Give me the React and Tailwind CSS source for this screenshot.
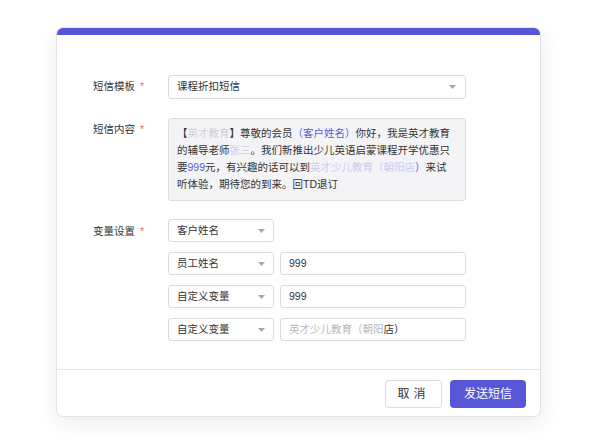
import React from "react";

const Caret = ({ className = "" }) => (
  <svg width="7" height="4" viewBox="0 0 7 4" className={className}>
    <path d="M0 0h7L3.5 4z" fill="#a8a8a8" />
  </svg>
);

const Label = ({ children, className = "" }) => (
  <div className={`w-[75px] shrink-0 text-[10.5px] text-[#333] ${className}`}>
    {children}
    <span className="ml-[5px] text-[#f0686a]">*</span>
  </div>
);

const SmallSelect = ({ value }) => (
  <div className="flex h-[23px] w-[106px] shrink-0 items-center justify-between rounded-[3px] border border-[#dcdcdc] bg-white pl-[8px] pr-[8px] text-[10.5px] text-[#333]">
    <span>{value}</span>
    <Caret />
  </div>
);

const TextInput = ({ children }) => (
  <div className="flex h-[23px] w-[186px] items-center overflow-hidden whitespace-nowrap rounded-[3px] border border-[#dcdcdc] bg-white pl-[8px] text-[10.5px] text-[#333]">
    {children}
  </div>
);

const variables = [
  { name: "员工姓名", value: "999" },
  { name: "自定义变量", value: "999" },
  { name: "自定义变量", value: "英才少儿教育（朝阳店）", faded: true },
];

export default function App() {
  return (
    <div
      className="flex h-[447px] w-full justify-center bg-white pt-[27px]"
      style={{ fontFamily: '"Liberation Sans", "Noto Sans CJK SC", sans-serif' }}
    >
      <div className="flex h-[390px] w-[485px] flex-col overflow-hidden rounded-[7px] border border-[#e4e4e4] bg-white shadow-[0_6px_22px_rgba(0,0,0,0.08)]">
        <div className="h-[7px] bg-[#5655d7]" />

        <div className="flex flex-col pl-[36px] pt-[40px]">
          {/* template */}
          <div className="flex items-center">
            <Label>短信模板</Label>
            <div className="flex h-[24px] w-[298px] items-center justify-between rounded-[3px] border border-[#dcdcdc] pl-[8px] pr-[9px] text-[10.5px] text-[#333]">
              <span>课程折扣短信</span>
              <Caret />
            </div>
          </div>

          {/* content */}
          <div className="mt-[19px] flex items-start">
            <Label className="pt-[4px]">短信内容</Label>
            <div className="h-[83px] w-[298px] rounded-[3px] border border-[#dcdcdc] bg-[#f4f4f6] pl-[8px] pr-[13px] pt-[6px] text-[10.5px] leading-[17px] text-[#333]">
              【<span className="text-[#cfcfd6]">英才教育</span>】尊敬的会员<span className="text-[#5a5ad6]">（客户姓名）</span>你好，我是英才教育的辅导老师<span className="text-[#c9cbf0]">张三</span>。我们新推出少儿英语启蒙课程开学优惠只要<span className="text-[#5a5ad6]">999</span>元，有兴趣的话可以到<span className="text-[#c9cbf0]">英才少儿教育（朝阳店</span><span className="text-[#5a5ad6]">）</span>来试听体验，期待您的到来。回TD退订
            </div>
          </div>

          {/* variables */}
          <div className="mt-[18px] flex items-start">
            <Label className="pt-[5px]">变量设置</Label>
            <div className="flex flex-col gap-[10px]">
              <SmallSelect value="客户姓名" />
              {variables.map((v, i) => (
                <div key={i} className="flex gap-[6px]">
                  <SmallSelect value={v.name} />
                  <TextInput>
                    {v.faded ? (
                      <span>
                        <span className="text-[#b8b8b8]">英才少儿教育（朝阳</span>店）
                      </span>
                    ) : (
                      v.value
                    )}
                  </TextInput>
                </div>
              ))}
            </div>
          </div>
        </div>

        <div className="mt-[28px] flex justify-end gap-[8px] border-t border-[#e6e6e6] pr-[14px] pt-[10px]">
          <button className="flex h-[28px] w-[57px] items-center justify-center rounded-[4px] border border-[#dcdcdc] bg-white text-[12px] tracking-[4px] text-[#333]">
            取消
          </button>
          <button className="flex h-[28px] w-[76px] items-center justify-center rounded-[4px] bg-[#5856d8] text-[12px] text-white">
            发送短信
          </button>
        </div>
      </div>
    </div>
  );
}
